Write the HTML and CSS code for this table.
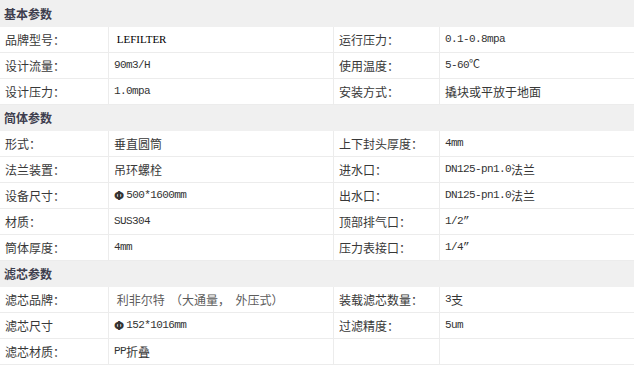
FILE: index.html
```html
<!DOCTYPE html>
<html lang="zh-CN">
<head>
<meta charset="utf-8">
<link rel="stylesheet" href="styles.css">
</head>
<body>
<div class="spec">
  <div class="sect first">基本参数</div>
  <div class="row">
    <div class="cell">品牌型号：</div>
    <div class="cell val"><span class="brand">&nbsp;LEFILTER</span></div>
    <div class="cell">运行压力：</div>
    <div class="cell val mono">0.1-0.8mpa</div>
  </div>
  <div class="row">
    <div class="cell">设计流量：</div>
    <div class="cell val mono">90m3/H</div>
    <div class="cell">使用温度：</div>
    <div class="cell val mono">5-60℃</div>
  </div>
  <div class="row">
    <div class="cell">设计压力：</div>
    <div class="cell val mono">1.0mpa</div>
    <div class="cell">安装方式：</div>
    <div class="cell val">撬块或平放于地面</div>
  </div>

  <div class="sect">简体参数</div>
  <div class="row">
    <div class="cell">形式：</div>
    <div class="cell val">垂直圆筒</div>
    <div class="cell">上下封头厚度：</div>
    <div class="cell val mono">4mm</div>
  </div>
  <div class="row">
    <div class="cell">法兰装置：</div>
    <div class="cell val">吊环螺栓</div>
    <div class="cell">进水口：</div>
    <div class="cell val mono">DN125-pn1.0<span class="cjk">法兰</span></div>
  </div>
  <div class="row">
    <div class="cell">设备尺寸：</div>
    <div class="cell val mono"><span class="cjk phi">Φ</span>500*1600mm</div>
    <div class="cell">出水口：</div>
    <div class="cell val mono">DN125-pn1.0<span class="cjk">法兰</span></div>
  </div>
  <div class="row">
    <div class="cell">材质：</div>
    <div class="cell val mono">SUS304</div>
    <div class="cell">顶部排气口：</div>
    <div class="cell val mono">1/2”</div>
  </div>
  <div class="row">
    <div class="cell">筒体厚度：</div>
    <div class="cell val mono">4mm</div>
    <div class="cell">压力表接口：</div>
    <div class="cell val mono">1/4”</div>
  </div>

  <div class="sect">滤芯参数</div>
  <div class="row">
    <div class="cell">滤芯品牌：</div>
    <div class="cell val soft">&nbsp;利非尔特&nbsp;&nbsp;（大通量，&nbsp;&nbsp;外压式）</div>
    <div class="cell">装载滤芯数量：</div>
    <div class="cell val mono">3<span class="cjk">支</span></div>
  </div>
  <div class="row">
    <div class="cell">滤芯尺寸</div>
    <div class="cell val mono"><span class="cjk phi">Φ</span>152*1016mm</div>
    <div class="cell">过滤精度：</div>
    <div class="cell val mono">5um</div>
  </div>
  <div class="row">
    <div class="cell">滤芯材质：</div>
    <div class="cell val mono">PP<span class="cjk">折叠</span></div>
    <div class="cell"></div>
    <div class="cell val"></div>
  </div>
</div>
</body>
</html>
```

FILE: styles.css
```css
html, body {
  margin: 0;
  padding: 0;
  background: #ffffff;
}

body {
  font-family: "Noto Sans CJK SC", "Noto Sans", sans-serif;
  font-size: 12px;
  color: #383838;
}

.spec {
  width: 634px;
}

.sect {
  height: 26px;
  box-sizing: border-box;
  background: #f0f0f0;
  font-weight: bold;
  color: #3e3e4e;
  padding-left: 4px;
  display: flex;
  align-items: center;
  line-height: 1;
}

.sect.first {
  height: 27px;
}

.row {
  display: grid;
  grid-template-columns: 109px 225px 106px 1fr;
  height: 26px;
  box-sizing: border-box;
  border-bottom: 1px solid #ececec;
}

.cell {
  display: flex;
  align-items: center;
  padding-left: 5px;
  box-sizing: border-box;
  border-right: 1px solid #ececec;
  white-space: nowrap;
  line-height: 1;
}

.cell:last-child {
  border-right: none;
}

.mono {
  font-family: "Liberation Mono", "DejaVu Sans Mono", monospace;
  font-size: 11px;
  letter-spacing: -0.6px;
  color: #333;
}

.cjk {
  font-family: "Noto Sans CJK SC", sans-serif;
  font-size: 12px;
  letter-spacing: 0;
}

.phi {
  font-family: "DejaVu Sans", sans-serif;
  font-size: 12px;
  font-weight: bold;
  color: #333;
  margin-right: 2px;
}

.brand {
  font-family: "Liberation Serif", serif;
  font-size: 11px;
  color: #000;
}

.soft {
  color: #5c5c5c;
}
```
